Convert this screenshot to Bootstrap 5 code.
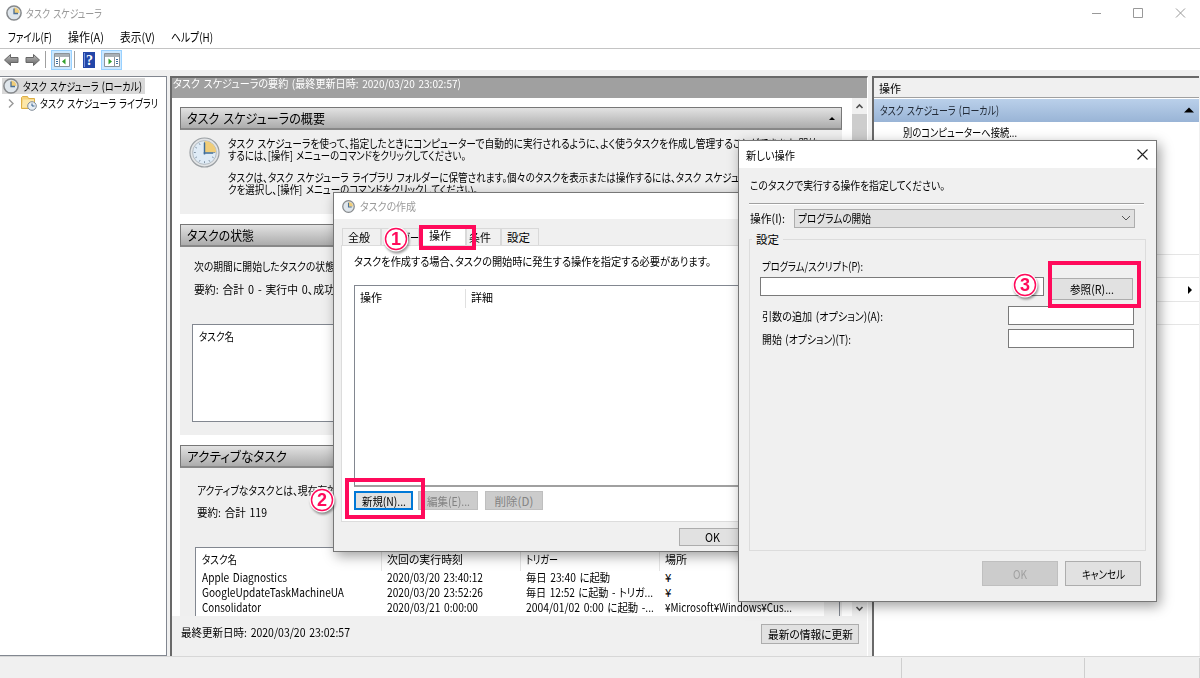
<!DOCTYPE html>
<html lang="ja">
<head>
<meta charset="utf-8">
<title>タスク スケジューラ</title>
<link href="https://cdn.jsdelivr.net/npm/bootstrap@5.3.0/dist/css/bootstrap.min.css" rel="stylesheet">
<style>
body{width:1200px;height:678px;overflow:hidden;background:#f0f0f0;color:#000;font-family:"Noto Sans CJK JP","Liberation Sans",sans-serif;font-size:11.5px;line-height:14px;font-feature-settings:"palt";word-spacing:1.5px}
svg{display:block;flex:none}
span{white-space:nowrap}
.app{height:678px}
.titlebar{height:26px;padding-left:6px;color:#999}
.menubar{height:22px;padding-left:8px;font-size:12px}
.menubar span{margin-right:16px}
.tools{height:22px;border-top:1px solid #c4c4c4;padding-left:4px}
.sep{width:1px;height:17px;background:#a0a0a0}
.toggled{width:21px;height:20px;background:#cce8ff;border:1px solid #99d1ff}
.work{height:580px;margin-top:6px}
.tree{width:167px;border:1px solid #828790;border-left:0;background:#fff;padding-top:1px}
.tree-row{height:17px}
.node-on{background:#d9d9d9;width:143px;margin-left:2px;height:16px;padding-left:1px}
.center{width:698px;margin-left:3px;border-left:2px solid #696969;border-top:2px solid #696969;border-right:1px solid #fff}
.cap{height:20px;background:#a0a0a0;color:#fff;padding-left:1px;line-height:11px;font-size:11px}
.view{height:518px;background:#fff;overflow:hidden}
.sections{width:671px;padding:9px 0 0 8px}
.sect{margin-bottom:10px;background:#efefef}
.sect-h{height:23px;border:1px solid #777;border-bottom:2px solid #888;background:linear-gradient(#e2e2e2,#acacac);padding:0 5px 0 6px;font-size:13px}
.b1{height:84px;padding:7px 0 0 9px}
.b1 .msg{line-height:12px}
.b1 .msg span{display:block}
.b2{height:188px;padding:12px 0 0 12px}
.b3{height:160px;padding:15px 0 0 15px}
.para{padding-left:2px}
.grid-box{border:1px solid #828790;background:#fff}
.cols{display:grid;grid-template-columns:185px 139px 139px 1fr;font-size:11.5px}
.cols.hd>span{border-left:1px solid #e5e5e5;padding-left:5px;height:19px;margin-left:-6px}
.cols.hd>span:first-child{border:0;padding-left:6px}
.sb{width:15px;background:#f0f0f0;margin-left:10px}
.thumb{height:140px;background:#cdcdcd}
.foot{height:40px;padding:0 8px 0 9px}
.winbtn{background:#e1e1e1;border:1px solid #adadad;display:flex;align-items:center;justify-content:center;flex:none}
.winbtn.off{background:#ccc;border-color:#bfbfbf;color:#838383}
.actions{width:327px;margin-left:4px;background:#fff;border-left:2px solid #696969;border-top:2px solid #696969}
.act-h{height:20px;background:#f0f0f0;border-bottom:1px solid #a0a0a0;padding-left:5px}
.act-blue{height:23px;margin-top:1px;background:linear-gradient(#bad0ea,#99b4d6);padding:0 5px 2px 6px;color:#222b38}
.rule{border-top:1px solid #e5e5e5;height:23.4px}
.status{height:22px;border-top:1px solid #d7d7d7;padding-top:1px}
.status>div{border-right:1px solid #cfcfcf;height:20px}
.dlg{background:#f0f0f0;border:1px solid #777;box-shadow:3px 4px 12px rgba(0,0,0,.38)}
.d-create{left:333px;top:192px;width:420px;height:360px;z-index:2}
.d-new{left:738px;top:140px;width:419px;height:462px;z-index:4}
.d-create .bar{height:26px;background:#fff;color:#999;padding-left:8px;gap:6px}
.d-new .bar{height:27px;background:#fff;padding:0 8px 0 7px}
.tabs-row{height:26px;padding-left:8px;align-items:flex-end}
.tb{height:17px;border:1px solid #d9d9d9;border-bottom:0;padding-left:5px;line-height:16px}
.tb.on{background:#fff;height:19px}
.page{margin-left:7px;height:277px;background:#fff;border:1px solid #dcdcdc;padding:8px 0 0 12px}
.list{height:202px;margin-top:17px;border:1px solid #828790;border-bottom:2px solid #a0a0a0;padding-top:3px}
.list>div{height:19px;padding:1px 0 0 5px;line-height:15px}
.list>div+div{border-left:1px solid #e0e0e0}
.primary{border:2px solid #0078d7}
.hr2{height:2px;background:#a0a0a0;border-bottom:1px solid #fff;margin:11px 0 0 10px;width:395px}
.group{margin:11px 0 0 10px;width:397px;height:312px;border:1px solid #dcdcdc;padding:19px 11px 0 10px}
.legend-t{left:2px;top:-8px;background:#f0f0f0;padding:0 4px;line-height:14px}
.fld{background:#fff;border:1px solid #7a7a7a;height:19px}
.frame{border:4px solid #ff0a5b;z-index:6}
.num{z-index:7;filter:drop-shadow(1px 2px 1px rgba(0,0,0,.4))}
.num text{font:700 18px "Liberation Sans",sans-serif;fill:#ff0a5b}
</style>
</head>
<body>
<svg width="0" height="0" class="position-absolute"><defs>
<linearGradient id="ar" x2="0" y2="1"><stop stop-color="#bbb"/><stop offset="1" stop-color="#666"/></linearGradient>
<symbol id="clock" viewBox="0 0 32 32"><circle cx="16" cy="16" r="15" fill="#e3e5e7" stroke="#9a9fa3" stroke-width="1.200"/><circle cx="16" cy="16" r="12.300" fill="#dfebf6" stroke="#b3babf"/><path d="M16 16V4a12 12 0 0 1 12 12z" fill="#f0cd79"/><path d="M16 5v2M16 25v2M5 16h2M25 16h2M10.500 6.500l1 1.700M6.500 10.500l1.700 1M6.500 21.500l1.700-1M10.500 25.500l1-1.700M21.500 25.500l-1-1.700M25.500 21.500l-1.700-1" stroke="#8294a5"/><path d="M16 6v12M15 16.500h10" fill="none" stroke="#3f6d99" stroke-width="1.500"/></symbol>
<symbol id="clock-s" viewBox="0 0 16 16"><circle cx="8" cy="8" r="7.100" fill="#dfe6ec" stroke="#85888b" stroke-width="1.500"/><path d="M8 8V2.500A5.500 5.500 0 0 1 13.500 8z" fill="#f0cd79"/><path d="M8 3.500v5h4" fill="none" stroke="#4a6f94" stroke-width="1.300"/></symbol>
</defs></svg>
<div class="app d-flex flex-column position-relative">
  <header class="bg-white">
    <div class="titlebar d-flex align-items-center">
      <svg width="16" height="16"><use href="#clock-s"/></svg><span class="ms-1" data-w="76">タスク スケジューラ</span>
      <svg class="ms-auto" style="margin-right:10px" width="100" height="12" fill="none" stroke="#999"><path d="M2 6.500h9M43.500 1.500h9v9h-9zM86 1.500l9 9M95 1.500l-9 9"/></svg>
    </div>
    <nav class="menubar d-flex align-items-center"><span data-w="44">ファイル(F)</span><span data-w="36">操作(A)</span><span data-w="35">表示(V)</span><span data-w="42">ヘルプ(H)</span></nav>
    <div class="tools d-flex align-items-center">
      <svg width="37" height="14" fill="url(#ar)" stroke="#666"><path d="M.500 7 6.500 1.500v3h7.500v5H6.500v3zM35.500 7l-6-5.500v3H22v5h7.500v3z"/></svg>
      <i class="sep ms-1"></i>
      <div class="toggled d-flex align-items-center justify-content-center" style="margin:0 2px 0 5px"><svg width="16" height="14"><path d="M.500.500h15v13H.500z" fill="#fff" stroke="#8b9298"/><path d="M1 1h14v3H1z" fill="#a9b0b6"/><path d="M5.500 4v9" stroke="#8b9298"/><path d="M2 6.500h2m-2 2h2m-2 2h2" stroke="#38699c"/><path d="M11.500 5.500v6L8 8.500z" fill="#32a02c"/></svg></div>
      <i class="sep"></i>
      <svg class="ms-2" width="12" height="16"><rect width="12" height="16" fill="#2346a8"/><path d="M1.500 1v14" stroke="#7995dc"/><text x="3" y="13" font-family="Liberation Serif" font-size="14" font-weight="700" fill="#fff">?</text></svg>
      <div class="toggled d-flex align-items-center justify-content-center" style="margin-left:6px"><svg width="16" height="14"><path d="M.500.500h15v13H.500z" fill="#fff" stroke="#8b9298"/><path d="M1 1h14v3H1z" fill="#a9b0b6"/><path d="M10.500 4v9" stroke="#8b9298"/><path d="M12 6.500h2m-2 2h2m-2 2h2" stroke="#38699c"/><path d="M4.500 5.500v6l3.500-3z" fill="#32a02c"/></svg></div>
    </div>
  </header>

  <main class="work d-flex">
    <aside class="tree">
      <div class="tree-row node-on d-flex align-items-center"><svg width="16" height="16"><use href="#clock-s"/></svg><span data-w="119" style="margin-left:4px">タスク スケジューラ (ローカル)</span></div>
      <div class="tree-row d-flex align-items-center"><svg width="40" height="17"><path d="m9 5.500 4 4-4 4" fill="none" stroke="#999" stroke-width="1.400"/><path d="M21.500 14.500v-11l1-1h5l1 2h6v10z" fill="#f6d27a" stroke="#dcae46"/><path d="M23 5.500h11v8H22z" fill="#fce7a9"/><circle cx="32" cy="12" r="4.300" fill="#e8eef4" stroke="#7f8b96"/><path d="M32 9.500V12h2.500" fill="none" stroke="#34618f"/></svg><span data-w="118">タスク スケジューラ ライブラリ</span></div>
    </aside>

    <section class="center">
      <div class="cap"><span data-w="288">タスク スケジューラの要約 (最終更新日時: 2020/03/20 23:02:57)</span></div>
      <div class="view d-flex">
        <div class="sections">
          <div class="sect">
            <div class="sect-h d-flex align-items-center justify-content-between"><span data-w="138">タスク スケジューラの概要</span><svg width="8" height="5"><path d="m1 4 3-3 3 3z"/></svg></div>
            <div class="b1 d-flex align-items-start"><svg width="31" height="31"><use href="#clock"/></svg>
              <div class="msg" style="margin-left:8px"><span data-w="590">タスク スケジューラを使って、指定したときにコンピューターで自動的に実行されるように、よく使うタスクを作成し管理することができます。開始</span><span data-w="238">するには、[操作] メニューのコマンドをクリックしてください。</span><span data-w="511" style="margin-top:10px">タスクは、タスク スケジューラ ライブラリ フォルダーに保管されます。個々のタスクを表示または操作するには、タスク スケジュ</span><span data-w="250">クを選択し、[操作] メニューのコマンドをクリックしてください。</span></div></div>
          </div>
          <div class="sect">
            <div class="sect-h d-flex align-items-center"><span data-w="67">タスクの状態</span></div>
            <div class="b2"><div class="para"><span data-w="141">次の期間に開始したタスクの状態</span></div><div class="para" style="margin-top:9px"><span data-w="141">要約: 合計 0 - 実行中 0、成功</span></div>
              <div class="grid-box" style="height:98px;margin-top:28px;padding:4px 6px;width:640px"><span data-w="35">タスク名</span></div></div>
          </div>
          <div class="sect">
            <div class="sect-h d-flex align-items-center"><span data-w="100">アクティブなタスク</span></div>
            <div class="b3"><div class="para"><span data-w="140">アクティブなタスクとは、現在有効</span></div><div class="para" style="margin-top:8px"><span data-w="70">要約: 合計 119</span></div>
              <div class="grid-box d-flex" style="height:98px;margin-top:28px;width:645px">
                <div style="width:628px;padding-left:6px"><div class="cols hd" style="padding-top:4px"><span><b class="fw-normal" data-w="35">タスク名</b></span><span><b class="fw-normal" data-w="76">次回の実行時刻</b></span><span><b class="fw-normal" data-w="32">トリガー</b></span><span><b class="fw-normal" data-w="22">場所</b></span></div>
                <div class="cols" style="line-height:15px;margin-top:-1px"><div><span data-w="85">Apple Diagnostics</span></div><div><span data-w="96">2020/03/20 23:40:12</span></div><div><span data-w="84">毎日 23:40 に起動</span></div><div>¥</div>
                <div><span data-w="142">GoogleUpdateTaskMachineUA</span></div><div><span data-w="96">2020/03/20 23:52:26</span></div><div><span data-w="127">毎日 12:52 に起動 - トリガ...</span></div><div>¥</div>
                <div><span data-w="59">Consolidator</span></div><div><span data-w="91">2020/03/21 0:00:00</span></div><div><span data-w="128">2004/01/02 0:00 に起動 -...</span></div><div><span data-w="127">¥Microsoft¥Windows¥Cus...</span></div></div></div>
                <div class="flex-fill" style="background:#f0f0f0"></div></div></div>
          </div>
        </div>
        <div class="sb d-flex flex-column"><svg width="15" height="16"><path d="m4.500 10 3-3 3 3" fill="none" stroke="#505050" stroke-width="1.600"/></svg><div class="thumb"></div><svg class="mt-auto" width="15" height="16"><path d="m4.500 7 3 3 3-3" fill="none" stroke="#505050" stroke-width="1.600"/></svg></div>
      </div>
      <div class="foot d-flex justify-content-between"><span data-w="169" style="margin-top:9px">最終更新日時: 2020/03/20 23:02:57</span><div class="winbtn" style="width:98px;height:20px;margin-top:8px"><span data-w="85">最新の情報に更新</span></div></div>
    </section>

    <aside class="actions">
      <div class="act-h d-flex align-items-center"><span data-w="22">操作</span></div>
      <div class="act-blue d-flex align-items-center justify-content-between"><span data-w="119">タスク スケジューラ (ローカル)</span><svg width="10" height="6"><path d="m0 5.500 5-5 5 5z"/></svg></div>
      <div style="padding:3px 0 0 29px"><span data-w="114">別のコンピューターへ接続...</span></div>
      <div style="margin-top:115px"><div class="rule"></div><div class="rule d-flex align-items-center justify-content-end pe-2"><svg width="6" height="8" style="margin-right:-2px"><path d="m1 0 4 4-4 4z"/></svg></div><div class="rule"></div><div class="rule"></div></div>
    </aside>
  </main>
  <footer class="status d-flex mt-auto"><div style="width:902px"></div><div style="width:183px"></div><div style="width:115px"></div></footer>

  <section class="dlg d-create position-absolute">
    <div class="bar d-flex align-items-center"><svg width="13" height="13"><use href="#clock-s"/></svg><span data-w="56" style="margin-left:-1px">タスクの作成</span></div>
    <div class="tabs-row d-flex"><div class="tb" style="width:39px"><span data-w="22">全般</span></div><div class="tb" style="width:38px"><span data-w="32">トリガー</span></div><div class="tb on" style="width:47px;padding-left:9px"><span data-w="22">操作</span></div><div class="tb" style="width:35px;padding-left:2px"><span data-w="22">条件</span></div><div class="tb" style="width:38px"><span data-w="23">設定</span></div></div>
    <div class="page"><span data-w="357">タスクを作成する場合、タスクの開始時に発生する操作を指定する必要があります。</span>
      <div class="list d-flex"><div style="width:110px"><span data-w="22">操作</span></div><div><span data-w="22">詳細</span></div></div>
      <div class="d-flex" style="margin-top:4px"><div class="winbtn primary" style="width:59px;height:19px"><span data-w="44">新規(N)...</span></div><div class="winbtn off" style="width:60px;height:19px;margin-left:5px"><span data-w="43">編集(E)...</span></div><div class="winbtn off" style="width:58px;height:19px;margin-left:7px"><span data-w="39">削除(D)</span></div></div>
    </div>
    <div class="winbtn" style="width:66px;height:18px;margin:6px 0 0 345px"><span data-w="15">OK</span></div>
  </section>

  <section class="dlg d-new position-absolute">
    <div class="bar d-flex align-items-center justify-content-between"><span data-w="49">新しい操作</span><svg width="11" height="11"><path d="m.500.500 10 10m0-10-10 10" stroke="#222" stroke-width="1.100"/></svg></div>
    <div style="padding:10px 0 0 11px"><span data-w="195">このタスクで実行する操作を指定してください。</span></div>
    <div class="hr2"></div>
    <div class="d-flex align-items-center" style="margin:3px 0 0 11px;height:20px"><span data-w="35">操作(I):</span><div class="winbtn justify-content-between" style="width:341px;height:19px;padding:0 3px;margin-left:9px"><span data-w="73">プログラムの開始</span><svg width="10" height="6"><path d="m1 1 4 4 4-4" fill="none" stroke="#555"/></svg></div></div>
    <div class="group position-relative"><span class="legend-t position-absolute"><span data-w="23">設定</span></span>
      <div style="padding-left:2px"><span data-w="101">プログラム/スクリプト(P):</span></div>
      <div class="d-flex" style="margin-top:4px"><div class="fld" style="width:284px"></div><div class="winbtn" style="width:83px;height:22px;margin-left:6px;margin-top:1px"><span data-w="44">参照(R)...</span></div></div>
      <div class="d-flex justify-content-between align-items-center" style="margin-top:6px;padding-left:2px"><span data-w="121">引数の追加 (オプション)(A):</span><div class="fld" style="width:126px"></div></div>
      <div class="d-flex justify-content-between align-items-center" style="margin-top:4px;padding-left:2px"><span data-w="89">開始 (オプション)(T):</span><div class="fld" style="width:126px"></div></div>
    </div>
    <div class="d-flex justify-content-end" style="margin:10px 15px 0 0;gap:7px"><div class="winbtn off" style="width:76px;height:25px;color:#a0a0a0"><span data-w="14">OK</span></div><div class="winbtn" style="width:76px;height:25px"><span data-w="43">キャンセル</span></div></div>
  </section>

  <div class="frame position-absolute" style="left:419px;top:225px;width:57px;height:25px"></div>
  <div class="frame position-absolute" style="left:345px;top:478px;width:80px;height:41px"></div>
  <div class="frame position-absolute" style="left:1048px;top:261px;width:93px;height:47px"></div>
  <svg class="num position-absolute" style="left:383px;top:226px" width="27" height="27"><circle cx="13" cy="13" r="12.500" fill="#fff"/><circle cx="13" cy="13" r="10.500" fill="#fff" stroke="#ff0a5b" stroke-width="1.500"/><text x="13" y="19.300" text-anchor="middle">1</text></svg>
  <svg class="num position-absolute" style="left:309px;top:487px" width="27" height="27"><circle cx="13" cy="13" r="12.500" fill="#fff"/><circle cx="13" cy="13" r="10.500" fill="#fff" stroke="#ff0a5b" stroke-width="1.500"/><text x="13" y="19.300" text-anchor="middle">2</text></svg>
  <svg class="num position-absolute" style="left:1012px;top:272px" width="27" height="27"><circle cx="13" cy="13" r="12.500" fill="#fff"/><circle cx="13" cy="13" r="10.500" fill="#fff" stroke="#ff0a5b" stroke-width="1.500"/><text x="13" y="19.300" text-anchor="middle">3</text></svg>
</div>
<script src="https://cdn.jsdelivr.net/npm/bootstrap@5.3.0/dist/js/bootstrap.bundle.min.js"></script>
<script>
// Fit each label to the width in data-w: long ones are condensed, short ones tracked out.
document.querySelectorAll('[data-w]').forEach(function (el) {
  var r = document.createRange();
  r.selectNodeContents(el);
  var natural = r.getBoundingClientRect().width, w = +el.dataset.w;
  if (natural > w) {
    if (getComputedStyle(el).display === 'inline') el.style.display = 'inline-block';
    el.style.verticalAlign = 'top';
    el.style.flex = 'none';
    el.style.width = natural + 'px';
    el.style.marginRight = (w - natural + (parseFloat(getComputedStyle(el).marginRight) || 0)) + 'px';
    el.style.transformOrigin = '0 50%';
    el.style.transform = 'scaleX(' + w / natural + ')';
  } else {
    el.style.letterSpacing = (w - natural) / el.textContent.length + 'px';
  }
});
</script>
</body>
</html>
